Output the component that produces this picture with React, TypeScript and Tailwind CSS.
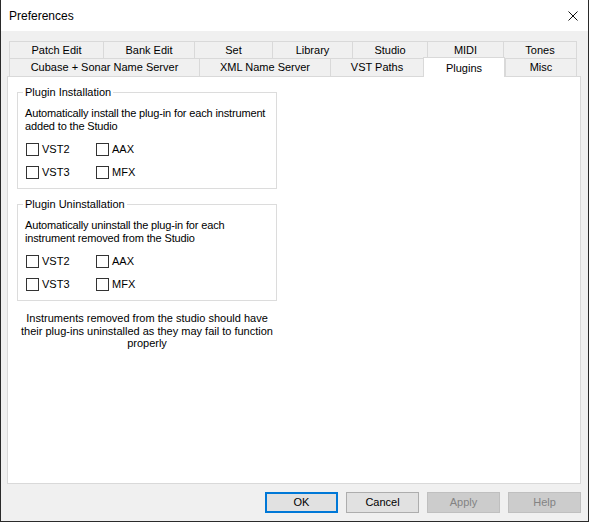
const ui = "font-['Liberation_Sans',Arial,sans-serif]";

const topTabs = [
  { label: "Patch Edit", w: "w-[94px]" },
  { label: "Bank Edit", w: "w-[91px]" },
  { label: "Set", w: "w-[78px]" },
  { label: "Library", w: "w-[80px]" },
  { label: "Studio", w: "w-[75px]" },
  { label: "MIDI", w: "w-[76px]" },
  { label: "Tones", w: "w-[74px]" },
];

const bottomTabs = [
  { label: "Cubase + Sonar Name Server", w: "w-[190px]" },
  { label: "XML Name Server", w: "w-[131px]" },
  { label: "VST Paths", w: "w-[93px]" },
  { label: "Plugins", w: "w-[82px]", active: true },
  { label: "Misc", w: "w-[72px]" },
];

function Tab({ label, w, active, last }: { label: string; w: string; active?: boolean; last?: boolean }) {
  if (active) {
    return (
      <div
        className={`${w} h-[20px] -mt-[2px] -mb-[1px] relative z-10 bg-white border border-b-0 border-[#d9d9d9] flex justify-center pt-[2px] text-[11px] text-black`}
      >
        {label}
      </div>
    );
  }
  return (
    <div
      className={`${w} h-full bg-[#f0f0f0] border-t border-l ${last ? "border-r" : ""} border-[#d9d9d9] flex items-center justify-center text-[11px] text-black`}
    >
      {label}
    </div>
  );
}

function Check({ label }: { label: string }) {
  return (
    <label className="w-[70px] flex items-center gap-[3px] text-[11px] text-black">
      <span className="w-[13px] h-[13px] border border-[#333333] bg-white shrink-0" />
      {label}
    </label>
  );
}

function Group({ title, text }: { title: string; text: string }) {
  return (
    <fieldset className="w-[260px] border border-[#dcdcdc] pl-[7px] pr-[3px] pb-[8px]">
      <legend className="-ml-[2px] px-[2px] text-[11px] text-black leading-[13px]">{title}</legend>
      <p className="pt-[8px] text-[11px] leading-[13px] tracking-[-0.15px] text-black">{text}</p>
      <div className="mt-[8px] flex flex-col gap-[7px] pl-[1px]">
        <div className="flex h-[16px]">
          <Check label="VST2" />
          <Check label="AAX" />
        </div>
        <div className="flex h-[16px]">
          <Check label="VST3" />
          <Check label="MFX" />
        </div>
      </div>
    </fieldset>
  );
}

function Button({ label, primary, disabled }: { label: string; primary?: boolean; disabled?: boolean }) {
  const look = primary
    ? "border-2 border-[#0078d7] bg-[#e1e1e1] text-black"
    : disabled
      ? "border border-[#bfbfbf] bg-[#cccccc] text-[#838383]"
      : "border border-[#adadad] bg-[#e1e1e1] text-black";
  return (
    <button className={`w-[73px] h-[21px] flex items-center justify-center text-[11px] ${look}`} disabled={disabled}>
      {label}
    </button>
  );
}

export default function App() {
  return (
    <div className={`w-[589px] h-[522px] bg-[#2a2a2a] pl-[1px] ${ui}`}>
      <div className="w-[587px] h-[521px] bg-[#f0f0f0] flex flex-col">
        <div className="h-[31px] bg-white flex items-center justify-between pl-[8px] pr-[10px]">
          <span className="text-[12px] text-black">Preferences</span>
          <svg width="10" height="10" viewBox="0 0 10 10">
            <path d="M0.5 0.5 L9.5 9.5 M9.5 0.5 L0.5 9.5" stroke="#111" strokeWidth="1" />
          </svg>
        </div>

        <div className="pt-[10px] flex flex-col">
          <div className="ml-[8px] w-[568px] flex flex-col">
            <div className="flex h-[17px]">
              {topTabs.map((t, i) => (
                <Tab key={t.label} label={t.label} w={t.w} last={i === topTabs.length - 1} />
              ))}
            </div>
            <div className="flex items-end h-[18px]">
              {bottomTabs.map((t, i) => (
                <Tab key={t.label} label={t.label} w={t.w} active={t.active} last={i === bottomTabs.length - 1} />
              ))}
            </div>
          </div>

          <div className="ml-[6px] w-[574px] h-[408px] bg-white border border-[#d9d9d9] pt-[9px] pl-[9px]">
            <div className="flex flex-col gap-[9px] w-[260px]">
              <Group
                title="Plugin Installation"
                text="Automatically install the plug-in for each instrument added to the Studio"
              />
              <Group
                title="Plugin Uninstallation"
                text="Automatically uninstall the plug-in for each instrument removed from the Studio"
              />
              <p className="mt-[2px] px-[2px] text-center text-[11px] leading-[12.5px] text-black">
                Instruments removed from the studio should have their plug-ins uninstalled as they may fail to function properly
              </p>
            </div>
          </div>

          <div className="mt-[8px] pr-[7px] flex justify-end gap-[8px]">
            <Button label="OK" primary />
            <Button label="Cancel" />
            <Button label="Apply" disabled />
            <Button label="Help" disabled />
          </div>
        </div>
      </div>
    </div>
  );
}
